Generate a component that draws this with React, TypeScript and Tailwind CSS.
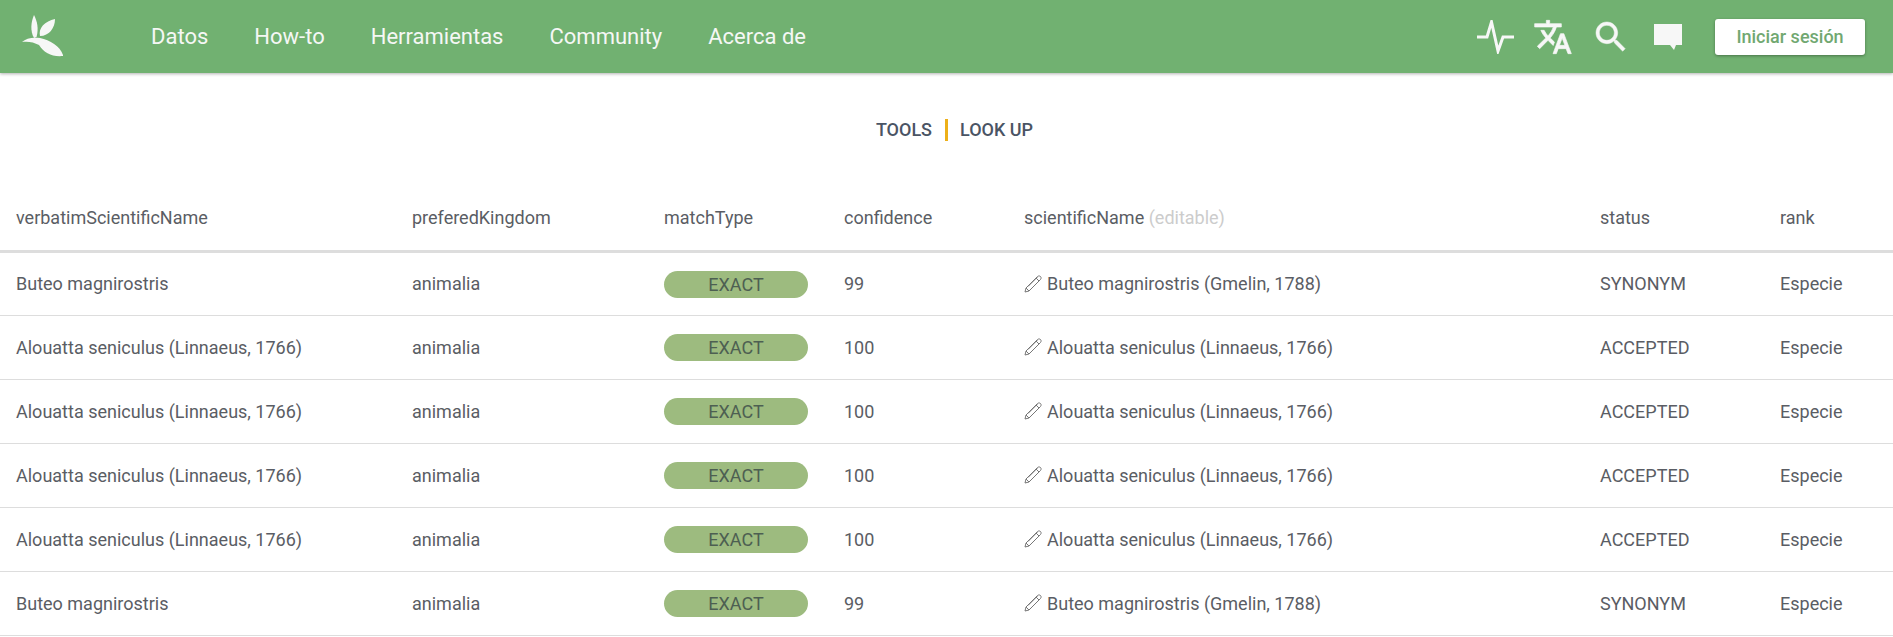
const rows = [
  { verbatim: 'Buteo magnirostris', confidence: 99, name: 'Buteo magnirostris (Gmelin, 1788)', status: 'SYNONYM' },
  { verbatim: 'Alouatta seniculus (Linnaeus, 1766)', confidence: 100, name: 'Alouatta seniculus (Linnaeus, 1766)', status: 'ACCEPTED' },
  { verbatim: 'Alouatta seniculus (Linnaeus, 1766)', confidence: 100, name: 'Alouatta seniculus (Linnaeus, 1766)', status: 'ACCEPTED' },
  { verbatim: 'Alouatta seniculus (Linnaeus, 1766)', confidence: 100, name: 'Alouatta seniculus (Linnaeus, 1766)', status: 'ACCEPTED' },
  { verbatim: 'Alouatta seniculus (Linnaeus, 1766)', confidence: 100, name: 'Alouatta seniculus (Linnaeus, 1766)', status: 'ACCEPTED' },
  { verbatim: 'Buteo magnirostris', confidence: 99, name: 'Buteo magnirostris (Gmelin, 1788)', status: 'SYNONYM' },
]

const navItems = ['Datos', 'How-to', 'Herramientas', 'Community', 'Acerca de']

function Logo() {
  return (
    <svg width="46" height="44" viewBox="0 0 46 44" fill="#f7f7f7">
      <path d="M14 0 C17 6 19 13 16.500 22 L14 23 C10 16 11 7 14 0 Z" />
      <path d="M35 4 C35 13 29 21 20 21 C18 13 25 6 35 4 Z" />
      <path d="M2 27 C6 23 13 22 20 23 C30 25 40 31 43 40 V41 C32 42 24 38 19 30 C14 27 7 26 2 27 Z" />
    </svg>
  )
}

function Pencil() {
  return (
    <svg width="18" height="18" viewBox="0 0 18 18" fill="none" stroke="#777" strokeWidth="1" className="shrink-0">
      <path d="M1 17 L2 13 L13.500 1.500 C14.500 0.700 15.700 0.800 16.500 1.500 C17.300 2.300 17.300 3.500 16.500 4.500 L5 16 Z" />
      <path d="M12 3 L15 6 M2 13 L5 16 M4 11.500 L13.500 2" />
    </svg>
  )
}

function Pulse() {
  return (
    <svg width="40" height="34" viewBox="0 0 40 34" fill="none" stroke="#f7f7f7" strokeWidth="3">
      <path d="M1 17 H11 L15.500 2 L22 31 L27 17 H38" />
    </svg>
  )
}

function Translate() {
  return (
    <svg width="40" height="40" viewBox="0 0 24 24" fill="#f7f7f7" stroke="#f7f7f7" strokeWidth="0.4">
      <path d="M12.870 15.070l-2.540-2.510.030-.030c1.740-1.940 2.980-4.170 3.710-6.530H17V4h-7V2H8v2H1v1.990h11.170C11.500 7.920 10.440 9.750 9 11.350 8.070 10.320 7.300 9.190 6.690 8h-2c.730 1.630 1.730 3.170 2.980 4.560l-5.090 5.020L4 19l5-5 3.110 3.110.760-2.040zM18.500 10h-2L12 22h2l1.120-3h4.750L21 22h2l-4.500-12zm-2.620 7l1.620-4.330L19.120 17h-3.240z" />
    </svg>
  )
}

function SearchIcon() {
  return (
    <svg width="40" height="40" viewBox="0 0 24 24" fill="#f7f7f7" stroke="#f7f7f7" strokeWidth="0.3">
      <path d="M15.500 14h-.790l-.280-.270C15.410 12.590 16 11.110 16 9.500 16 5.910 13.090 3 9.500 3S3 5.910 3 9.500 5.910 16 9.500 16c1.610 0 3.090-.590 4.230-1.570l.270.280v.790l5 4.990L20.490 19l-4.990-5zm-6 0C7.010 14 5 11.990 5 9.500S7.010 5 9.500 5 14 7.010 14 9.500 11.990 14 9.500 14z" />
    </svg>
  )
}

function Feedback() {
  return (
    <svg width="30" height="30" viewBox="0 0 30 30" fill="#f7f7f7">
      <path d="M1 2 H29 V23 H23 L21 28 L17 23 H1 Z" />
    </svg>
  )
}

export default function App() {
  return (
    <div className="min-h-[637px] overflow-hidden bg-white font-['Roboto',sans-serif]">
      <header className="flex h-[73px] items-center bg-[#71b171] pl-5 pr-7 shadow-[0_1px_3px_rgba(0,0,0,0.3)]">
        <Logo />
        <nav className="ml-[85px] flex gap-[46px] text-[22px] text-[#f5f7f5]">
          {navItems.map((item) => (
            <a key={item}>{item}</a>
          ))}
        </nav>
        <div className="ml-auto flex items-center text-[#f7f7f7]">
          <Pulse />
          <div className="ml-[17px]">
            <Translate />
          </div>
          <div className="ml-[18px]">
            <SearchIcon />
          </div>
          <div className="ml-[22px]">
            <Feedback />
          </div>
          <button className="ml-[32px] h-9 w-[150px] rounded-[3px] bg-white text-[18px] font-medium text-[#71a871] shadow-[0_1px_3px_rgba(0,0,0,0.35)]">
            Iniciar sesión
          </button>
        </div>
      </header>

      <div className="flex h-[116px] items-start justify-center pl-4 pt-[46px] text-[18px] font-medium text-[#4a5464]">
        <span className="leading-[22px]">TOOLS</span>
        <span className="ml-[13px] mr-3 h-[22px] w-[3px] bg-[#edb019]" />
        <span className="leading-[22px]">LOOK UP</span>
      </div>

      <table className="w-full table-fixed border-collapse text-[18px] text-[#5a5d64]">
        <colgroup>
          <col className="w-[396px]" />
          <col className="w-[252px]" />
          <col className="w-[180px]" />
          <col className="w-[180px]" />
          <col className="w-[576px]" />
          <col className="w-[180px]" />
          <col />
        </colgroup>
        <thead>
          <tr className="h-[62px] border-b-[3px] border-[#dddddd] text-left">
            <th className="px-4 pb-[3px] font-normal">verbatimScientificName</th>
            <th className="px-4 pb-[3px] font-normal">preferedKingdom</th>
            <th className="px-4 pb-[3px] font-normal">matchType</th>
            <th className="px-4 pb-[3px] font-normal">confidence</th>
            <th className="px-4 pb-[3px] font-normal">
              scientificName <span className="text-[#cccccc]">(editable)</span>
            </th>
            <th className="px-4 pb-[3px] font-normal">status</th>
            <th className="px-4 pb-[3px] font-normal">rank</th>
          </tr>
        </thead>
        <tbody>
          {rows.map((row, i) => (
            <tr key={i} className="h-16 border-b border-[#dddddd]">
              <td className="px-4">{row.verbatim}</td>
              <td className="px-4">animalia</td>
              <td className="px-4">
                <div className="mt-px h-[27px] w-36 rounded-[14px] bg-[#9dbb7f] text-center leading-[27px] text-[#4d5f52]">
                  EXACT
                </div>
              </td>
              <td className="px-4">{row.confidence}</td>
              <td className="px-4">
                <div className="flex items-center gap-[5px]">
                  <Pencil />
                  <span>{row.name}</span>
                </div>
              </td>
              <td className="px-4">{row.status}</td>
              <td className="px-4">Especie</td>
            </tr>
          ))}
        </tbody>
      </table>
    </div>
  )
}
